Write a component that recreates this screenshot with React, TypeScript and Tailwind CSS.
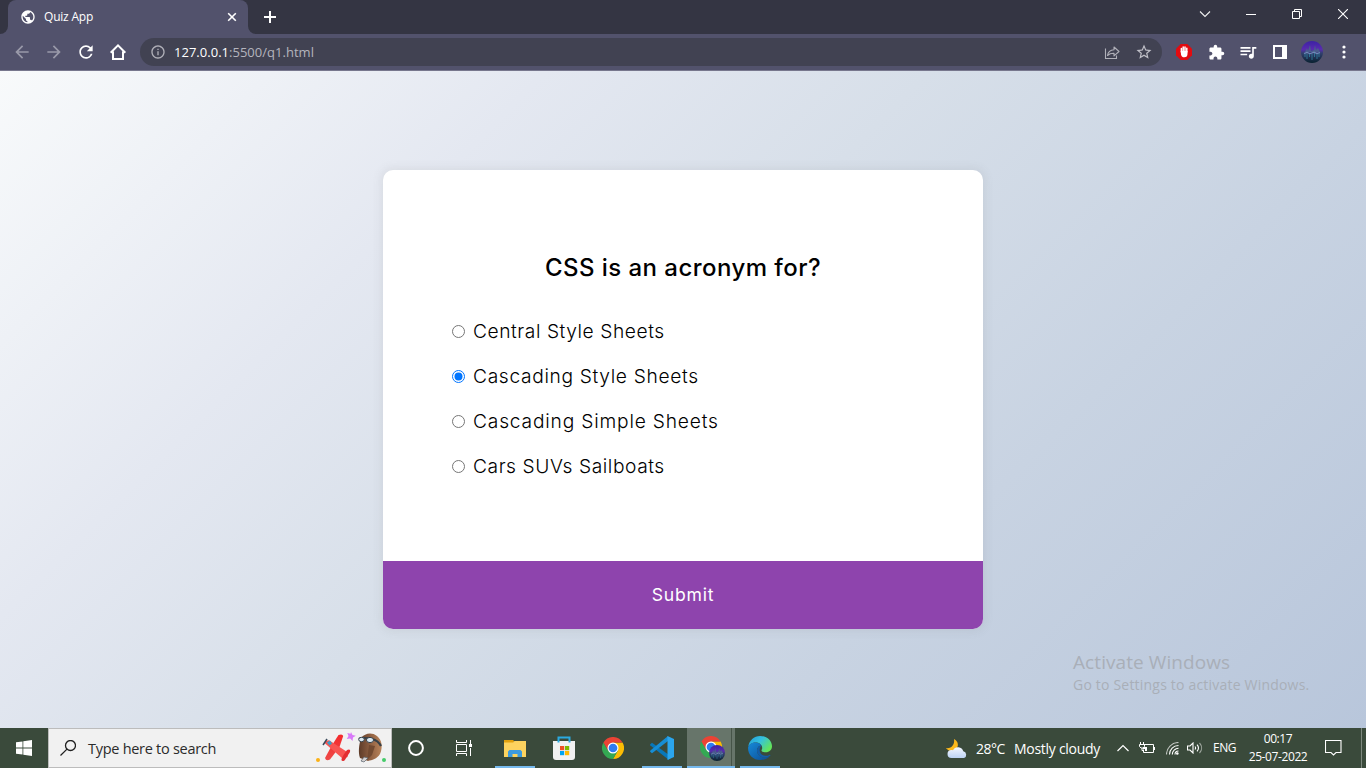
import type { ReactNode } from "react";
import {
  MdArrowBack,
  MdArrowForward,
  MdRefresh,
  MdPublic,
  MdInfoOutline,
  MdStarBorder,
  MdExtension,
  MdQueueMusic,
} from "react-icons/md";

function Cell({ children, className = "" }: { children?: ReactNode; className?: string }) {
  return <div className={"flex shrink-0 items-center justify-center " + className}>{children}</div>;
}

function TabStrip() {
  return (
    <div className="flex h-[34px] shrink-0 items-start bg-[#343543] text-white">
      <div className="flex h-[34px] w-2 items-end bg-[#52526c]">
        <div className="h-[34px] w-2 rounded-br-lg bg-[#343543]" />
      </div>
      <div className="flex h-[34px] w-[240px] items-center rounded-t-lg bg-[#52526c] pr-[9px] pl-3">
        <MdPublic className="size-4" />
        <span className="ml-[8px] flex-1 text-[12px] leading-4 tracking-[-0.2px]">Quiz App</span>
        <svg className="size-[14px]" viewBox="0 0 14 14" stroke="#fff" strokeWidth="1.6">
          <path d="M3.2 3.2l7.6 7.6M10.8 3.2l-7.6 7.6" />
        </svg>
      </div>
      <div className="flex h-[34px] w-2 bg-[#52526c]">
        <div className="h-[34px] w-2 rounded-bl-lg bg-[#343543]" />
      </div>
      <Cell className="h-[34px] w-7">
        <svg className="size-3" viewBox="0 0 12 12" stroke="#fff" strokeWidth="2">
          <path d="M6 0v12M0 6h12" />
        </svg>
      </Cell>
      <div className="flex-1" />
      <Cell className="h-7 w-[46px]">
        <svg className="size-3" viewBox="0 0 12 12" fill="none" stroke="#f0f0f0" strokeWidth="1.1">
          <path d="M1 3.500l5 5 5-5" />
        </svg>
      </Cell>
      <Cell className="h-7 w-[46px]">
        <div className="mt-[1px] h-px w-[10px] bg-white" />
      </Cell>
      <Cell className="h-7 w-[46px]">
        <svg className="size-[10px]" viewBox="0 0 10 10" fill="none" stroke="#fff">
          <path d="M.5 2.5h7v7h-7zM2.5 2.5v-2h7v7h-2" />
        </svg>
      </Cell>
      <Cell className="h-7 w-[46px]">
        <svg className="size-[10px]" viewBox="0 0 10 10" stroke="#fff" strokeWidth="1.1">
          <path d="M0 0l10 10M10 0L0 10" />
        </svg>
      </Cell>
    </div>
  );
}

function Avatar({ className }: { className: string }) {
  return (
    <svg className={className} viewBox="0 0 22 22">
      <defs>
        <linearGradient id="night" x1="0" y1="0" x2="0" y2="1">
          <stop offset="0" stopColor="#3c22a4" />
          <stop offset=".38" stopColor="#5a2bb0" />
          <stop offset=".55" stopColor="#32406f" />
          <stop offset="1" stopColor="#08202f" />
        </linearGradient>
      </defs>
      <circle cx="11" cy="11" r="11" fill="url(#night)" />
      <path d="M4 11l2-4 1 3 2-6 1 6 3-1 1-5 1 5 2-2 2 4z" fill="#4a5d8c" />
      <path d="M4 12v4M6 13v5M8.500 12v4M11 13v6M13.500 12v4M16 13v5M18 12v4" stroke="#2f7896" strokeWidth=".9" />
      <path d="M3 12.500l3-1 3 1.200 4-1.500 3 1.300 3-1" stroke="#708ab8" strokeWidth="1.200" fill="none" />
    </svg>
  );
}

function Toolbar() {
  return (
    <div className="flex h-[37px] shrink-0 items-center border-b border-[#77778d] bg-[#52526c] pl-[6px] text-white">
      <Cell className="w-8 text-[#9999a9]"><MdArrowBack className="size-5" /></Cell>
      <Cell className="w-8 text-[#9999a9]"><MdArrowForward className="size-5" /></Cell>
      <Cell className="w-8"><MdRefresh className="size-5" /></Cell>
      <Cell className="w-8">
        <svg className="size-[18px]" viewBox="0 0 18 18" fill="none" stroke="#fff" strokeWidth="2">
          <path d="M1.7 9.7L9 2.400l7.300 7.300M4 8.500V16h10V8.500" />
        </svg>
      </Cell>
      <div className="mr-[6px] ml-[6px] flex h-7 w-[1022px] items-center rounded-full bg-[#414252] pl-[10px]">
        <MdInfoOutline className="size-4 text-[#b0b0b8]" />
        <span className="ml-2 text-[13px] leading-5 tracking-[0.02px] text-[#b4b4bd]">
          <span className="text-white">127.0.0.1</span>:5500/q1.html
        </span>
        <div className="flex-1" />
        <Cell className="w-8">
          <svg className="size-4" viewBox="0 0 16 16" fill="none" stroke="#b0b0b8" strokeWidth="1.1">
            <path d="M1.5 4.5v10h11v-3" />
            <path d="M3.5 11.5c.6-3.7 2.8-5.5 6.5-5.7V3l5 4.5-5 4.4V9.2C7.3 9.1 5.2 9.8 3.5 11.5z" strokeLinejoin="round" />
          </svg>
        </Cell>
        <Cell className="mr-[2px] w-8"><MdStarBorder className="size-[18px] text-[#c0c0c8]" /></Cell>
      </div>
      <Cell className="w-8">
        <svg className="size-4" viewBox="0 0 16 16">
          <path d="M4.7 0h6.600L16 4.700v6.600L11.300 16H4.700L0 11.300V4.700z" fill="#e30b10" />
          <path d="M5.4 8V4.500M7.200 8V2.900M9 8V3M10.800 8V4.300" stroke="#fff" strokeWidth="1.5" strokeLinecap="round" />
          <path d="M4.7 7h6.800v3c0 2-1.200 3.300-3.100 3.300-2 0-2.700-1-3.300-2.400z" fill="#fff" />
        </svg>
      </Cell>
      <Cell className="w-8"><MdExtension className="size-[17px]" /></Cell>
      <Cell className="w-8"><MdQueueMusic className="size-5" /></Cell>
      <Cell className="w-8">
        <svg className="size-[14px]" viewBox="0 0 14 14">
          <path d="M0 0h14v14H0zM2 2v10h7V2z" fill="#fff" fillRule="evenodd" />
        </svg>
      </Cell>
      <Cell className="w-8"><Avatar className="size-[22px]" /></Cell>
      <Cell className="w-8">
        <svg className="h-[14px] w-1" viewBox="0 0 4 14" fill="#fff">
          <circle cx="2" cy="2" r="1.6" /><circle cx="2" cy="7" r="1.6" /><circle cx="2" cy="12" r="1.6" />
        </svg>
      </Cell>
    </div>
  );
}

function Option({ text, checked = false, className }: { text: string; checked?: boolean; className: string }) {
  return (
    <label className="flex h-[45px] items-center">
      <span
        className={
          "flex size-[13px] items-center justify-center rounded-full border " +
          (checked ? "border-[#0075ff]" : "border-[#767676]")
        }
      >
        {checked && (
          <svg className="size-[9px]" viewBox="0 0 9 9"><circle cx="4.5" cy="4.5" r="4" fill="#0075ff" /></svg>
        )}
      </span>
      <span className={"mb-[2px] ml-2 whitespace-nowrap " + className}>{text}</span>
    </label>
  );
}

function Quiz() {
  return (
    <main className="relative flex flex-1 items-center justify-center bg-[linear-gradient(135deg,#f8fafb_0%,#e4e8f1_27%,#d7dfe9_46%,#c8d3e2_70%,#b8c6db_100%)]">
      <div className="flex h-[459px] w-[600px] flex-col overflow-hidden rounded-[10px] bg-white font-['Inter',sans-serif] text-black shadow-[0_0_10px_2px_rgba(100,100,100,0.1)]">
        <div className="flex flex-1 flex-col">
          <h2 className="mt-[78px] text-center text-[24px] leading-10 font-medium tracking-[0.45px]">
            CSS is an acronym for?
          </h2>
          <div className="mt-[21px] pl-[69px] text-[19.2px] leading-7 font-light">
            <Option text="Central Style Sheets" className="tracking-[0.56px]" />
            <Option text="Cascading Style Sheets" checked className="tracking-[0.66px]" />
            <Option text="Cascading Simple Sheets" className="tracking-[0.81px]" />
            <Option text="Cars SUVs Sailboats" className="tracking-[0.57px]" />
          </div>
        </div>
        <button className="h-[68px] shrink-0 bg-[#8e44ad] text-[17.6px] tracking-[0.75px] text-white">Submit</button>
      </div>
      <div className="absolute top-[578px] left-[1073px] whitespace-nowrap text-[#a9afb8]">
        <p className="text-[19px] leading-[26px] tracking-[0.08px]">Activate Windows</p>
        <p className="text-[14px] leading-5 tracking-[0.2px]">Go to Settings to activate Windows.</p>
      </div>
    </main>
  );
}

function TaskCell({ children, bar = false }: { children: ReactNode; bar?: boolean }) {
  return (
    <div className="flex h-10 w-[49px] shrink-0 flex-col items-center">
      <div className="flex flex-1 items-center justify-center">{children}</div>
      <div className={"-mt-[2px] h-[2px] w-10 " + (bar ? "bg-[#76b9ed]" : "")} />
    </div>
  );
}

function Chrome({ className }: { className: string }) {
  return (
    <svg className={className} viewBox="0 0 48 48">
      <path d="M44.8 12A24 24 0 0 1 24 48l10.400-18L24 12z" fill="#fbbc04" />
      <path d="M3.2 12A24 24 0 0 0 24 48l10.400-18H13.600z" fill="#34a853" />
      <path d="M3.2 12A24 24 0 0 1 44.800 12H24L13.600 30z" fill="#ea4335" />
      <circle cx="24" cy="24" r="12" fill="#fff" />
      <circle cx="24" cy="24" r="9.5" fill="#2f7cf0" />
    </svg>
  );
}

function SearchArt() {
  return (
    <svg className="mr-[1px] h-[38px] w-[75px]" viewBox="315 729 75 38">
      <defs>
        <linearGradient id="leather" x1="0" y1="0" x2="1" y2="0">
          <stop offset="0" stopColor="#5d3b28" /><stop offset=".55" stopColor="#936344" /><stop offset="1" stopColor="#b9845a" />
        </linearGradient>
        <linearGradient id="wing" x1="0" y1="0" x2="0" y2="1">
          <stop offset="0" stopColor="#f4292b" /><stop offset="1" stopColor="#ee4a48" />
        </linearGradient>
      </defs>
      <path d="M338.500 735q4-1.500 4.700 1l-3.700 11-9.500 12.500q-4 2-5-1.500l6.500-12z" fill="url(#wing)" />
      <path d="M324.500 743q2-3.500 5-2.500L348 752.500l-.5 4.500-5 1.500z" fill="#f85552" />
      <path d="M347 750q4-1.500 3 2l-5.500 8.500q-3.500 1.500-3-1.500l2-4z" fill="#e32e31" />
      <path d="M327 742.500l3-2 2 3-2.500 2z" fill="#3a9fc9" />
      <path d="M323 745l4-6" stroke="#39495a" strokeWidth="1.5" />
      <path d="M351 732l1.500 3 3.300.8-2.800 1.800-.5 3.400-2.300-2.600-3.400.6 1.700-2.900-1.200-3.200 3.200.8z" fill="#d879f8" />
      <path d="M361 738c4-5 11-6 16-2 5 4 6 11 3 18-3 5-8 6-12 7l-8-3c-2-6-1-13 1-20z" fill="url(#leather)" />
      <path d="M369 745l6 1-3 9-5 5z" fill="#724a31" />
      <path d="M359 739c3-2 8-1 13 0 4 1 7 3 9 7" stroke="#374149" strokeWidth="2.2" fill="none" />
      <ellipse cx="361.5" cy="739.5" rx="2.800" ry="2.200" fill="#dceaf3" stroke="#374149" />
      <ellipse cx="370" cy="740" rx="3.600" ry="2.600" fill="#dceaf3" stroke="#374149" />
      <path d="M361 761l3-4 4 1-4 4z" fill="#d3d0d0" stroke="#58616b" strokeWidth=".7" />
      <circle cx="318" cy="760" r="2" fill="#fbb116" />
      <circle cx="384" cy="760" r="2" fill="#45cb6a" />
    </svg>
  );
}

function Taskbar() {
  return (
    <footer className="flex h-10 shrink-0 items-center bg-[#3a4a3b] text-white">
      <Cell className="w-12">
        <svg className="size-4" viewBox="0 0 16 16" fill="#fff">
          <path d="M0 2.300l6.500-.9v6.200H0zM7.300 1.300L16 0v7.600H7.300zM0 8.400h6.500v6.200L0 13.700zM7.300 8.400H16V16l-8.700-1.300z" />
        </svg>
      </Cell>
      <div className="flex h-10 w-[344px] shrink-0 items-center border border-[#bcbcbc] bg-[#f1f1f1] pl-[11px] text-[#2b2b2b]">
        <svg className="size-4" viewBox="0 0 16 16" fill="none" stroke="#202020" strokeWidth="1.3">
          <circle cx="10.5" cy="5.5" r="5" /><path d="M7 9.100L.5 15.500" />
        </svg>
        <span className="mt-[1px] ml-3 text-[14.5px] tracking-[-0.28px] whitespace-nowrap">Type here to search</span>
        <div className="flex-1" />
        <SearchArt />
      </div>
      <Cell className="w-12">
        <svg className="size-4" viewBox="0 0 16 16" fill="none" stroke="#fff" strokeWidth="2"><circle cx="8" cy="8" r="6.9" /></svg>
      </Cell>
      <Cell className="w-[50px] pr-[2px]">
        <svg className="size-4" viewBox="0 0 16 16" fill="none" stroke="#fff" strokeWidth="1">
          <path d="M.5 4.500h10v7H.5zM.5 0v2.500h10V0M.5 16v-2.500h10V16M14.500 0v4M14.500 8v8" />
          <path d="M13 4h3v3h-3z" fill="#fff" stroke="none" />
        </svg>
      </Cell>
      <TaskCell bar>
        <svg className="h-[17px] w-[22px]" viewBox="0 0 22 17">
          <path d="M0 0h9l1.500 1.500L9 3H0z" fill="#e2a10e" />
          <path d="M0 2.500h9L10.500 1H22v16H0z" fill="#fdd35f" />
          <path d="M4 17v-5.500L5.500 10h11l1.500 1.500V17h-4.500v-3h-5v3z" fill="#3d9be0" />
        </svg>
      </TaskCell>
      <TaskCell>
        <svg className="size-6" viewBox="0 0 24 24">
          <path d="M1 5h22v16c0 1.800-1 3-3 3H4c-2 0-3-1.200-3-3z" fill="#f1f1f1" />
          <path d="M6.500 6.500v-5h11v5" fill="none" stroke="#2aaae2" strokeWidth="2" />
          <path d="M8 10h4.200v4.200H8z" fill="#ef5124" /><path d="M13 10h4.200v4.200H13z" fill="#7fba00" />
          <path d="M8 15h4.200v4.200H8z" fill="#00a4ef" /><path d="M13 15h4.200v4.200H13z" fill="#ffb900" />
        </svg>
      </TaskCell>
      <TaskCell><Chrome className="size-[22px]" /></TaskCell>
      <TaskCell bar>
        <svg className="size-6" viewBox="0 0 24 24">
          <path d="M0 8.500l2-1.800L19 19v5L.4 9.500z" fill="#0877b9" />
          <path d="M0 15.500l2 1.800L18 5V0L.4 14.500z" fill="#168ed5" />
          <path d="M17.500 0L24 3v18l-6.500 3z" fill="#2ba6ed" />
        </svg>
      </TaskCell>
      <div className="flex h-10 w-[49px] shrink-0 flex-col border-l border-[#3a4a3b] bg-[#67756a]">
        <div className="flex flex-1">
          <div className="relative flex w-[45px] items-center justify-center border-r border-[#465448] pl-1">
            <Chrome className="size-[22px]" />
            <div className="absolute top-[17px] left-[22px] flex"><Avatar className="size-4" /></div>
          </div>
        </div>
        <div className="h-[2px] bg-[#76b9ed]" />
      </div>
      <TaskCell bar>
        <svg className="size-6" viewBox="0 0 24 24">
          <defs>
            <linearGradient id="wave" x1="0" y1="0" x2="1" y2=".6">
              <stop offset="0" stopColor="#209bd9" /><stop offset=".5" stopColor="#35c1df" /><stop offset="1" stopColor="#63e55a" />
            </linearGradient>
            <linearGradient id="deep" x1="0" y1="0" x2="1" y2="1">
              <stop offset="0" stopColor="#1689d8" /><stop offset="1" stopColor="#0c4c93" />
            </linearGradient>
          </defs>
          <path d="M.2 11C1 4.500 6 0 12.200 0 19 0 24 5 24 10.300c0 3.500-2.700 6-6.200 6-2.700 0-4.300-1-4.300-1.900 0-.5.700-1 .7-2.300C14.200 8.500 11 6.500 7.500 6.500 3.500 6.500.8 9 .2 11z" fill="url(#wave)" />
          <path d="M.1 11.500C.8 8.500 3.800 6.500 7.500 6.500c2.300 0 5 1.200 6.200 3-2.200-.4-4.700 1.900-4.700 5 0 4.400 4.300 7.700 9 7 1.300-.2 2.500-.7 3.700-1.300C19.600 22.700 16 24 12 24 5.200 24-.3 18.500.1 11.500z" fill="url(#deep)" />
          <path d="M9 14.500c0 4.400 4.300 7.700 9 7 1.700-.3 3-.9 4.200-1.800.5-.5 0-1.200-.7-.8-4 2-8.700.8-9.700-3.700-.4-2 .2-4 1.600-5.500-2.200-.3-4.400 1.800-4.400 4.800z" fill="#125da9" />
        </svg>
      </TaskCell>
      <div className="flex-1" />
      <div className="flex w-[420px] shrink-0 items-center">
        <svg className="h-[21px] w-[22px]" viewBox="0 0 22 21">
          <defs>
            <linearGradient id="cloud" x1="0" y1="0" x2="0" y2="1">
              <stop stopColor="#f4f8ff" /><stop offset="1" stopColor="#bdd3f4" />
            </linearGradient>
          </defs>
          <path d="M8 1c4.500 2 5.500 8 1 11-3 2-7 1-9-2 5 1 9-3 8-9z" fill="#fbb81c" />
          <path d="M5.500 20a4 4 0 0 1 0-8c.6 0 1 .1 1.500.3a5.500 5.500 0 0 1 10.300 1A3.500 3.500 0 0 1 18 20z" fill="url(#cloud)" />
        </svg>
        <div className="mt-[1px] ml-2 w-[38px] text-[14px] tracking-[-0.5px] whitespace-nowrap">28°C</div>
        <div className="mt-[1px] w-[103px] text-[14px] tracking-[-0.28px] whitespace-nowrap">Mostly cloudy</div>
        <svg className="h-2 w-3" viewBox="0 0 12 8" fill="none" stroke="#fff" strokeWidth="1.2"><path d="M.5 7L6 1.500 11.500 7" /></svg>
        <svg className="ml-[10px] h-3 w-4" viewBox="0 0 16 12" fill="none" stroke="#fff" strokeWidth="1">
          <path d="M5 2.500h9.500v8H4.500v-3M15.500 5v3M1.500 0v2M4.500 0v2M.5 2.500h5v2L4 6H2L.5 4.500zM3 6v2.500h1.500" />
          <path d="M4 5h4v4H6V7H4z" fill="#fff" stroke="none" />
        </svg>
        <svg className="ml-[11px] h-[13px] w-[13px]" viewBox="0 0 13 13" fill="none" stroke="#fff" strokeWidth="1.1">
          <path d="M.5 12.500a12 12 0 0 1 12-12" opacity=".7" />
          <path d="M3.500 12.500a9 9 0 0 1 9-9M6.300 12.500a6.200 6.200 0 0 1 6.200-6.200M9 12.500a3.500 3.500 0 0 1 3.500-3.500" />
          <circle cx="11.3" cy="11.5" r="1.3" fill="#fff" stroke="none" />
        </svg>
        <svg className="ml-2 h-3 w-4" viewBox="0 0 16 12" fill="none" stroke="#fff" strokeWidth="1.1">
          <path d="M.5 4v4H3l3 3V1L3 4zM8 4.500c.8 1 .8 2 0 3M10 2.700c1.800 2 1.800 4.600 0 6.600" />
          <path d="M12.500 1c2.800 3 2.800 7 0 10" opacity=".5" />
        </svg>
        <div className="ml-[10px] w-6 text-[12px] tracking-[-0.5px]">ENG</div>
        <div className="ml-[8px] w-[66px] text-center text-[12px] leading-[18px] tracking-[-0.4px] whitespace-nowrap">
          <div>00:17</div>
          <div>25-07-2022</div>
        </div>
        <svg className="ml-[14px] h-4 w-[17px]" viewBox="0 0 17 16" fill="none" stroke="#fff" strokeWidth="1.1">
          <path d="M.5 .5h15.500v12H11L8.500 15 6 12.500H.5z" />
        </svg>
        <div className="ml-[19px] h-10 w-px bg-[#7d887e]" />
      </div>
    </footer>
  );
}

export default function App() {
  return (
    <div className="flex h-[768px] w-[1366px] flex-col overflow-hidden font-['Open_Sans','Noto_Sans',sans-serif]">
      <TabStrip />
      <Toolbar />
      <Quiz />
      <Taskbar />
    </div>
  );
}
